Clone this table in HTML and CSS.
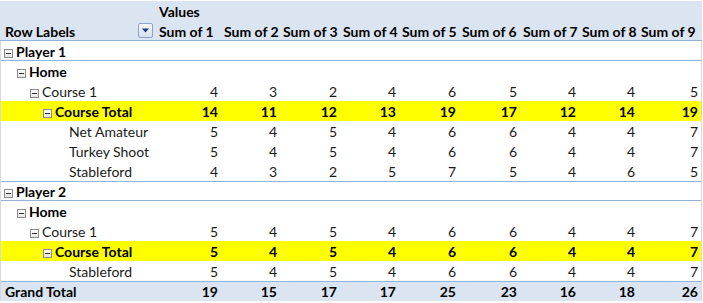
FILE: index.html
```html
<!DOCTYPE html>
<html>
<head>
<meta charset="utf-8">
<link rel="stylesheet" href="styles.css">
</head>
<body>
<table class="pivot">
  <colgroup>
    <col class="c0"><col class="c1"><col class="c2"><col class="c3"><col class="c4"><col class="c5"><col class="c6"><col class="c7"><col class="c8"><col class="c9">
  </colgroup>
  <thead>
    <tr class="h1"><th></th><th class="hl">Values</th><th></th><th></th><th></th><th></th><th></th><th></th><th></th><th></th></tr>
    <tr class="h2">
      <th class="rl"><span>Row Labels</span><span class="dd"><svg width="9" height="5" viewBox="0 0 9 5"><path d="M1 0.5h7L4.5 4.5z" fill="#1f3a7a"/></svg></span></th>
      <th class="hl">Sum of 1</th><th class="hl">Sum of 2</th><th class="hl">Sum of 3</th><th class="hl">Sum of 4</th><th class="hl">Sum of 5</th><th class="hl">Sum of 6</th><th class="hl">Sum of 7</th><th class="hl">Sum of 8</th><th class="hl">Sum of 9</th>
    </tr>
  </thead>
  <tbody>
    <tr class="sep"><td class="lab b l0"><i class="mn"></i>Player 1</td><td></td><td></td><td></td><td></td><td></td><td></td><td></td><td></td><td></td></tr>
    <tr><td class="lab b l1"><i class="mn"></i>Home</td><td></td><td></td><td></td><td></td><td></td><td></td><td></td><td></td><td></td></tr>
    <tr><td class="lab l2"><i class="mn"></i>Course 1</td><td>4</td><td>3</td><td>2</td><td>4</td><td>6</td><td>5</td><td>4</td><td>4</td><td>5</td></tr>
    <tr class="tot"><td class="lab b l3"><i class="mn"></i>Course Total</td><td>14</td><td>11</td><td>12</td><td>13</td><td>19</td><td>17</td><td>12</td><td>14</td><td>19</td></tr>
    <tr><td class="lab l4">Net Amateur</td><td>5</td><td>4</td><td>5</td><td>4</td><td>6</td><td>6</td><td>4</td><td>4</td><td>7</td></tr>
    <tr><td class="lab l4">Turkey Shoot</td><td>5</td><td>4</td><td>5</td><td>4</td><td>6</td><td>6</td><td>4</td><td>4</td><td>7</td></tr>
    <tr><td class="lab l4">Stableford</td><td>4</td><td>3</td><td>2</td><td>5</td><td>7</td><td>5</td><td>4</td><td>6</td><td>5</td></tr>
    <tr class="both"><td class="lab b l0"><i class="mn"></i>Player 2</td><td></td><td></td><td></td><td></td><td></td><td></td><td></td><td></td><td></td></tr>
    <tr><td class="lab b l1"><i class="mn"></i>Home</td><td></td><td></td><td></td><td></td><td></td><td></td><td></td><td></td><td></td></tr>
    <tr><td class="lab l2"><i class="mn"></i>Course 1</td><td>5</td><td>4</td><td>5</td><td>4</td><td>6</td><td>6</td><td>4</td><td>4</td><td>7</td></tr>
    <tr class="tot"><td class="lab b l3"><i class="mn"></i>Course Total</td><td>5</td><td>4</td><td>5</td><td>4</td><td>6</td><td>6</td><td>4</td><td>4</td><td>7</td></tr>
    <tr><td class="lab l4">Stableford</td><td>5</td><td>4</td><td>5</td><td>4</td><td>6</td><td>6</td><td>4</td><td>4</td><td>7</td></tr>
  </tbody>
  <tfoot>
    <tr class="gt"><td class="lab">Grand Total</td><td>19</td><td>15</td><td>17</td><td>17</td><td>25</td><td>23</td><td>16</td><td>18</td><td>26</td></tr>
  </tfoot>
</table>
</body>
</html>
```
FILE: styles.css
```css
html, body {
  margin: 0;
  padding: 0;
  background: #ffffff;
}
.pivot {
  border-collapse: collapse;
  table-layout: fixed;
  width: 702px;
  margin-top: 1px;
  font-family: Lato, "Liberation Sans", sans-serif;
  font-size: 14px;
  color: #1a1a1a;
}
.c0 { width: 157px; }
.c1 { width: 65px; }
.c2 { width: 59px; }
.c3 { width: 60px; }
.c4 { width: 59px; }
.c5 { width: 60px; }
.c6 { width: 61px; }
.c7 { width: 59px; }
.c8 { width: 59px; }
.c9 { width: 63px; }
th, td {
  padding: 1px 4px 0 2px;
  height: 19px;
  line-height: 19px;
  white-space: nowrap;
  overflow: visible;
  border: 0;
}
thead th {
  background: #dbe5f1;
  font-weight: bold;
  color: #000;
  text-align: left;
  padding-top: 2px;
  height: 18px;
  line-height: 18px;
}
.h2 th {
  background: linear-gradient(to top, #95b3d7 1px, #dbe5f1 1px);
}
.rl { position: relative; padding-left: 5px; }
.dd {
  position: absolute;
  right: 4px;
  top: 2px;
  width: 15px;
  height: 15px;
  box-sizing: border-box;
  border: 1px solid #8ea4c2;
  border-radius: 2px;
  background: linear-gradient(#f4f7fb, #d6e0ee);
  display: flex;
  align-items: center;
  justify-content: center;
}
tbody td, tfoot td {
  text-align: right;
}
tbody tr td:first-child, tfoot tr td:first-child { box-shadow: inset 1px 0 0 #d9d9d9; }
tbody tr td:last-child, tfoot tr td:last-child { box-shadow: inset -1px 0 0 #d9d9d9; }
td.lab { text-align: left; }
.b { font-weight: bold; color: #000; }
.l0 { padding-left: 4px; }
.l1 { padding-left: 17px; }
.l2 { padding-left: 30px; }
.l3 { padding-left: 43px; }
.l4 { padding-left: 69px; }
.mn {
  display: inline-block;
  width: 9px;
  height: 9px;
  box-sizing: border-box;
  border: 1px solid #8c8c8c;
  background: linear-gradient(#ffffff, #e4e4e4);
  margin-right: 3px;
  vertical-align: -1px;
  position: relative;
}
.mn::after {
  content: "";
  position: absolute;
  left: 1px;
  right: 1px;
  top: 3px;
  height: 1px;
  background: #333;
}
.sep td {
  background: linear-gradient(to top, #95b3d7 1px, #ffffff 1px);
}
.both td {
  background: linear-gradient(to bottom, #95b3d7 1px, #ffffff 1px, #ffffff 19px, #95b3d7 19px);
}
.tot td {
  background: #ffff00;
  font-weight: bold;
  color: #000;
}
.gt td {
  background: linear-gradient(to bottom, #95b3d7 1px, #dbe5f1 1px);
  font-weight: bold;
  color: #000;
}
.gt td.lab { padding-left: 5px; }
```
